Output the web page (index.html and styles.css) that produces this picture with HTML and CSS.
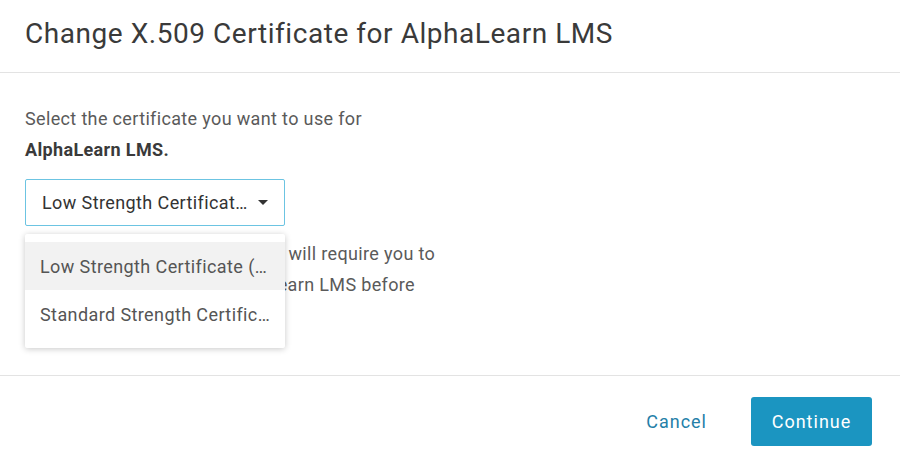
FILE: index.html
```html
<!DOCTYPE html>
<html lang="en">
<head>
<meta charset="utf-8">
<title>Change X.509 Certificate</title>
<link rel="stylesheet" href="styles.css">
</head>
<body>
<div class="dialog">
  <header class="dialog-header">
    <h1 class="dialog-title">Change X.509 Certificate for AlphaLearn LMS</h1>
  </header>
  <main class="dialog-body">
    <p class="intro">Select the certificate you want to use for <strong>AlphaLearn LMS.</strong></p>
    <div class="select-wrap">
      <div class="select">
        <span class="select-value">Low Strength Certificate (SHA-1)</span>
        <span class="caret"></span>
      </div>
      <ul class="menu">
        <li class="menu-item active"><span>Low Strength Certificate (SHA-1)</span></li>
        <li class="menu-item"><span>Standard Strength Certificate (SHA-256)</span></li>
      </ul>
    </div>
    <p class="note">Changing to another certificate will require you to update your settings in AlphaLearn LMS before applying the new certificate.</p>
  </main>
  <footer class="dialog-footer">
    <button class="btn btn-link">Cancel</button>
    <button class="btn btn-primary">Continue</button>
  </footer>
</div>
</body>
</html>
```
FILE: styles.css
```css
* { box-sizing: border-box; }
html, body { margin: 0; padding: 0; background: #fff; }
body {
  font-family: Roboto, "Liberation Sans", Arial, sans-serif;
  color: #555;
}
.dialog {
  width: 900px;
  height: 465px;
  display: flex;
  flex-direction: column;
}
.dialog-header {
  height: 73px;
  border-bottom: 1px solid #e3e3e3;
  padding: 0 25px;
  display: flex;
  align-items: center;
}
.dialog-title {
  margin: 0 0 6px 0;
  font-size: 28px;
  font-weight: 400;
  color: #3a3a3a;
  letter-spacing: 0.55px;
}
.dialog-body {
  flex: 1;
  padding: 30px 25px 0 25px;
  border-bottom: 1px solid #e3e3e3;
}
.intro, .note {
  margin: 0;
  font-size: 18px;
  line-height: 31px;
  letter-spacing: 0.35px;
  color: #5a5a5a;
}
.intro { width: 408px; }
.note { width: 440px; }
.intro strong { color: #3a3a3a; font-weight: 700; }
.select-wrap {
  position: relative;
  width: 260px;
  margin: 14px 0 12px 0;
}
.select {
  height: 47px;
  border: 1px solid #6cc4e2;
  border-radius: 2px;
  padding: 0 16px 0 16px;
  display: flex;
  align-items: center;
  justify-content: space-between;
  font-size: 18px;
  letter-spacing: 0.4px;
  color: #333;
}
.select-value {
  width: 208px;
  white-space: nowrap;
  overflow: hidden;
  text-overflow: ellipsis;
}
.caret {
  width: 0;
  height: 0;
  border-left: 5px solid transparent;
  border-right: 5px solid transparent;
  border-top: 5px solid #333;
}
.menu {
  position: absolute;
  top: 55px;
  left: 0;
  width: 260px;
  margin: 0;
  padding: 8px 0 10px 0;
  list-style: none;
  background: #fff;
  border-radius: 2px;
  box-shadow: 0 1px 6px rgba(0, 0, 0, 0.22);
  z-index: 2;
}
.menu-item {
  height: 48px;
  padding: 0 15px;
  display: flex;
  align-items: center;
  font-size: 18px;
  letter-spacing: 0.4px;
  color: #555;
}
.menu-item span {
  display: block;
  width: 100%;
  white-space: nowrap;
  overflow: hidden;
  text-overflow: ellipsis;
}
.menu-item.active { background: #f2f2f2; }
.dialog-footer {
  height: 89px;
  padding: 21px 28px 0 0;
  display: flex;
  justify-content: flex-end;
  align-items: flex-start;
  gap: 24px;
}
.btn {
  font-family: Roboto, "Liberation Sans", Arial, sans-serif;
  font-size: 18px;
  letter-spacing: 1px;
  height: 49px;
  padding: 0 20px;
  border-radius: 3px;
  border: none;
  cursor: pointer;
}
.btn-link {
  background: transparent;
  color: #2480a8;
}
.btn-primary {
  background: #1b95c1;
  color: #fff;
  width: 121px;
}
```
